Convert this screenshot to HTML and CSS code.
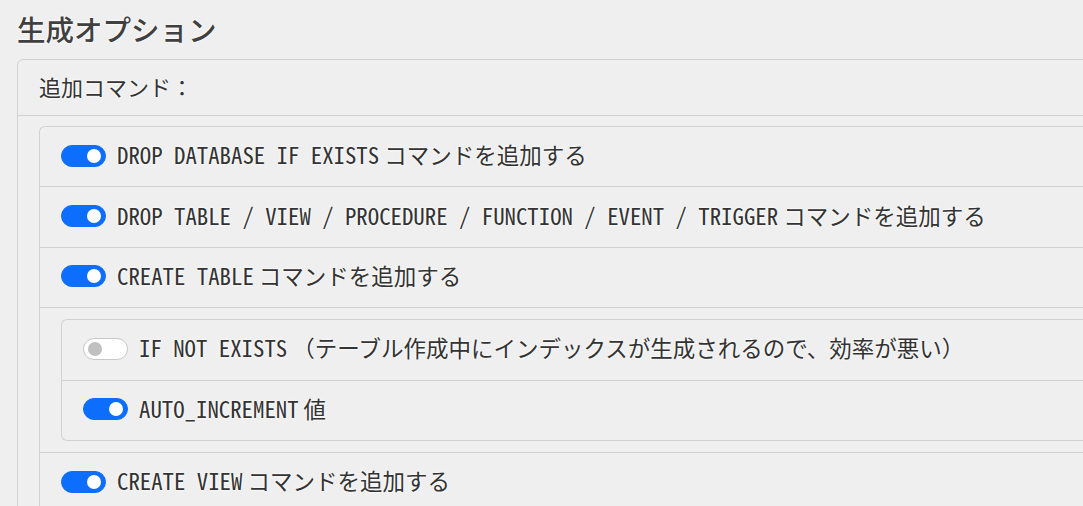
FILE: index.html
```html
<!DOCTYPE html>
<html lang="ja">
<head>
    <meta charset="UTF-8">
    <meta name="viewport" content="width=device-width, initial-scale=1.0">
    <title>生成オプション</title>
    <link rel="stylesheet" href="styles.css">
</head>
<body>
    <h2 class="title">生成オプション</h2>

    <div class="card">
        <div class="card-header">追加コマンド：</div>
        <div class="card-body">
            <ul class="options">
                <li class="option">
                    <label class="switch"><input type="checkbox" checked><span class="slider"></span></label>
                    <span class="label"><code>DROP DATABASE IF EXISTS</code> コマンドを追加する</span>
                </li>
                <li class="option">
                    <label class="switch"><input type="checkbox" checked><span class="slider"></span></label>
                    <span class="label"><code>DROP TABLE / VIEW / PROCEDURE / FUNCTION / EVENT / TRIGGER</code> コマンドを追加する</span>
                </li>
                <li class="option">
                    <label class="switch"><input type="checkbox" checked><span class="slider"></span></label>
                    <span class="label"><code>CREATE TABLE</code> コマンドを追加する</span>
                </li>
                <li class="option nested">
                    <ul class="options">
                        <li class="option">
                            <label class="switch"><input type="checkbox"><span class="slider"></span></label>
                            <span class="label"><code>IF NOT EXISTS</code> （テーブル作成中にインデックスが生成されるので、効率が悪い）</span>
                        </li>
                        <li class="option">
                            <label class="switch"><input type="checkbox" checked><span class="slider"></span></label>
                            <span class="label"><code>AUTO_INCREMENT</code> 値</span>
                        </li>
                    </ul>
                </li>
                <li class="option">
                    <label class="switch"><input type="checkbox" checked><span class="slider"></span></label>
                    <span class="label"><code>CREATE VIEW</code> コマンドを追加する</span>
                </li>
            </ul>
        </div>
    </div>
</body>
</html>
```

FILE: styles.css
```css
body {
    margin: 0;
    padding: 0 0 0 17px;
    width: 1200px;
    background: #efefef;
    color: #333;
    font-family: "Noto Sans CJK JP", sans-serif;
    text-shadow: 0 0 3px #fff, 0 0 2px #fff;
    overflow: hidden;
}

.title {
    margin: 0;
    padding-top: 10px;
    height: 49px;
    font-size: 28.5px;
    font-weight: 500;
    line-height: 38px;
    color: #404040;
}

.card {
    border: 1px solid #d2d2d2;
    border-radius: 6px;
}

.card-header {
    height: 55px;
    padding-left: 21px;
    font-size: 22px;
    line-height: 53px;
    border-bottom: 1px solid #d2d2d2;
}

.card-body {
    padding: 10px 0 0 21px;
}

.options {
    list-style: none;
    margin: 0;
    padding: 0;
    border: 1px solid #d2d2d2;
    border-right: none;
    border-radius: 6px 0 0 6px;
}

.option {
    display: flex;
    align-items: center;
    gap: 11px;
    height: 59.4px;
    padding-left: 21px;
    border-top: 1px solid #d2d2d2;
}

.option:first-child {
    border-top: none;
}

.option.nested {
    display: block;
    height: auto;
    padding: 11px 0 11px 21px;
}

.label {
    font-size: 22.5px;
    line-height: 30px;
    padding-bottom: 4px;
    white-space: nowrap;
}

.label code {
    font-family: "Noto Sans Mono CJK JP", "Liberation Mono", monospace;
    font-size: 22.8px;
}

.switch {
    position: relative;
    display: inline-block;
    width: 45px;
    height: 22px;
    margin-bottom: 2px;
    flex-shrink: 0;
}

.switch input {
    display: none;
}

.slider {
    position: absolute;
    inset: 0;
    box-sizing: border-box;
    background: #fff;
    border: 1px solid #c8c8c8;
    border-radius: 11px;
}

.slider::before {
    content: "";
    position: absolute;
    left: 4px;
    top: 3px;
    width: 14px;
    height: 14px;
    border-radius: 50%;
    background: #c0c0c0;
}

.switch input:checked + .slider {
    background: #0d6efd;
    border-color: #0d6efd;
}

.switch input:checked + .slider::before {
    left: auto;
    right: 4px;
    background: #fff;
}
```
